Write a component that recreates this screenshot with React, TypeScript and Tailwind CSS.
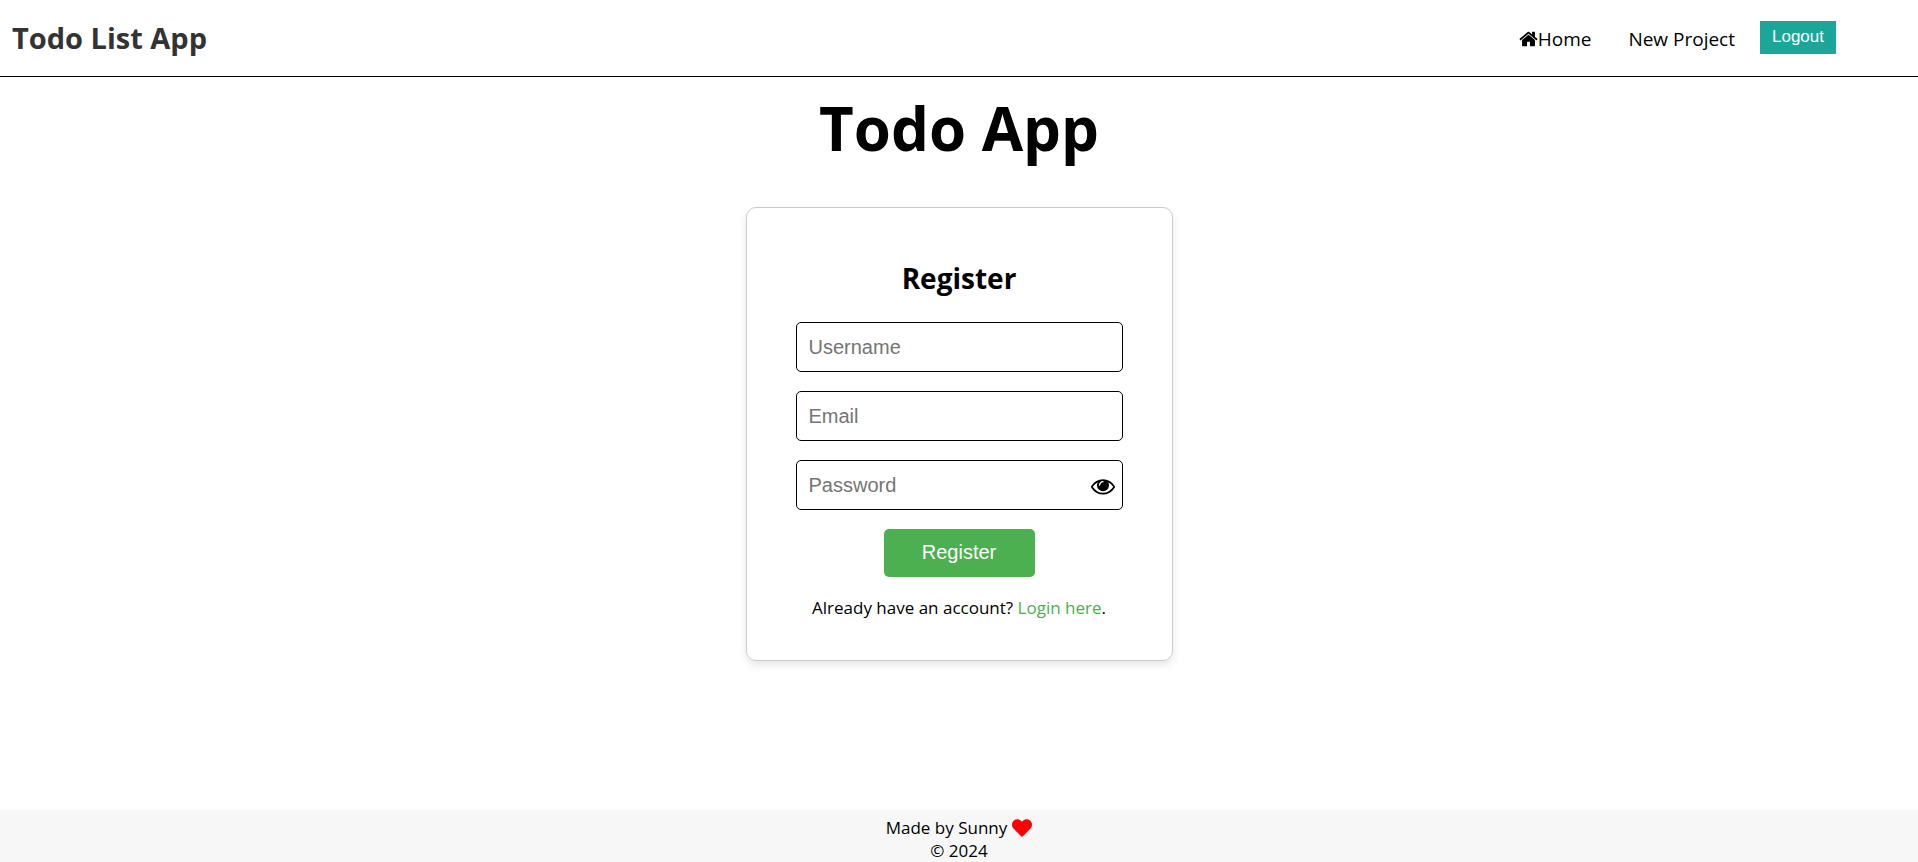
import { useState } from 'react';

function HomeIcon() {
  return (
    <svg viewBox="64 0 1664 1792" className="h-5 w-[19px]" fill="currentColor" aria-hidden="true">
      <path d="M1472 992v480q0 26-19 45t-45 19h-384v-384h-256v384h-384q-26 0-45-19t-19-45v-480q0-1 .5-3t.5-3l575-474 575 474q1 2 1 6zm223-69l-62 74q-8 9-21 11h-3q-13 0-21-7l-692-577-692 577q-12 8-24 7-13-2-21-11l-62-74q-8-10-7-23.5t11-21.5l719-599q32-26 76-26t76 26l244 204v-195q0-14 9-23t23-9h192q14 0 23 9t9 23v408l219 182q10 8 11 21.5t-7 23.5z" />
    </svg>
  );
}

function EyeIcon() {
  return (
    <svg viewBox="0 0 1792 1792" className="size-6" fill="currentColor" aria-hidden="true">
      <path d="M1664 960q-152-236-381-353 61 104 61 225 0 185-131.5 316.5t-316.5 131.5-316.5-131.5-131.5-316.5q0-121 61-225-229 117-381 353 133 205 333.5 326.5t434.5 121.5 434.5-121.5 333.5-326.5zm-720-384q0-20-14-34t-34-14q-125 0-214.5 89.5t-89.5 214.5q0 20 14 34t34 14 34-14 14-34q0-86 61-147t147-61q20 0 34-14t14-34zm848 384q0 34-20 69-140 230-376.5 368.5t-499.5 138.5-499.5-139-376.5-368q-20-35-20-69t20-69q140-229 376.5-368t499.5-139 499.5 139 376.5 368q20 35 20 69z" />
    </svg>
  );
}

function HeartIcon() {
  return (
    <svg viewBox="0 0 512 512" className="h-5 w-5 text-[#ff0000]" fill="currentColor" aria-hidden="true">
      <path d="M462.3 62.6C407.5 15.9 326 24.3 275.7 76.2L256 96.5l-19.7-20.3C186.1 24.3 104.5 15.9 49.7 62.6c-62.8 53.6-66.1 149.8-9.9 207.9l193.5 199.8c12.5 12.9 32.8 12.9 45.3 0l193.5-199.8c56.3-58.1 53-154.3-9.8-207.9z" />
    </svg>
  );
}

const fieldClass =
  'h-[50px] w-full rounded-[5px] border border-black bg-white px-3 pb-0.5 pt-0.5 font-["Liberation_Sans",Arial,sans-serif] text-xl text-black outline-none placeholder:text-[#757575]';

export default function App() {
  const [visible, setVisible] = useState(false);

  return (
    <div className='flex min-h-screen flex-col bg-white font-["Open_Sans",sans-serif] text-black'>
      <header className="flex h-[77px] items-center justify-between border-b border-black pl-3 pr-[82px]">
        <h2 className="text-[29px] font-bold text-[#333333]">Todo List App</h2>
        <nav className="flex items-center pt-0.5">
          <a href="#home" className="flex items-center text-[19px]">
            <HomeIcon />
            Home
          </a>
          <a href="#new-project" className="ml-[37px] text-[19px]">
            New Project
          </a>
          <button
            type="button"
            className='mb-1 ml-[25px] h-[33px] bg-[#1ba69a] px-3 font-["Liberation_Sans",Arial,sans-serif] text-[17px] text-white'
          >
            Logout
          </button>
        </nav>
      </header>

      <main className="flex flex-1 flex-col items-center">
        <h1 className="mt-2 text-[60px] font-bold leading-[86px]">Todo App</h1>
        <form
          className="mt-9 flex w-[427px] flex-col items-center rounded-[10px] border border-[#cccccc] px-[49px] pb-10 pt-[49px] shadow-[0_4px_8px_rgba(0,0,0,0.1)]"
          onSubmit={(event) => event.preventDefault()}
        >
          <h2 className="mb-[23px] text-[28px] font-bold leading-[42px]">Register</h2>
          <div className="flex w-full flex-col gap-[19px]">
            <input type="text" aria-label="Username" placeholder="Username" className={fieldClass} />
            <input type="email" aria-label="Email" placeholder="Email" className={fieldClass} />
            <div className="relative">
              <input
                type={visible ? 'text' : 'password'}
                aria-label="Password"
                placeholder="Password"
                className={fieldClass}
              />
              <button
                type="button"
                aria-label="Toggle password visibility"
                className="absolute right-2 top-3.5"
                onClick={() => setVisible(!visible)}
              >
                <EyeIcon />
              </button>
            </div>
          </div>
          <button
            type="submit"
            className='mt-[19px] h-12 w-[151px] rounded-[5px] bg-[#4caf50] pb-0.5 font-["Liberation_Sans",Arial,sans-serif] text-xl text-white'
          >
            Register
          </button>
          <p className="mt-[18px] text-[17px] leading-[25px]">
            Already have an account?{' '}
            <a href="#login" className="text-[#4caf50]">
              Login here
            </a>
            .
          </p>
        </form>
      </main>

      <footer className="flex flex-col items-center bg-[#f7f7f7] pt-1.5 text-[17px] leading-[23px]">
        <p className="flex items-center gap-[5px]">
          Made by Sunny <HeartIcon />
        </p>
        <p>© 2024</p>
      </footer>
    </div>
  );
}
